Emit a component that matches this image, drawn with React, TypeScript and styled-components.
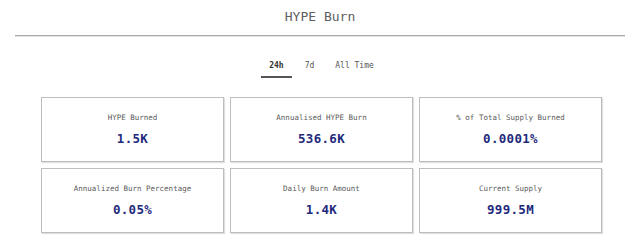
import React, { useState } from "react";
import styled, { createGlobalStyle } from "styled-components";

const GlobalStyle = createGlobalStyle`
  html, body {
    margin: 0;
    padding: 0;
    background: #ffffff;
  }
  body {
    font-family: "DejaVu Sans Mono", "Liberation Mono", monospace;
  }
`;

const stats = [
  { label: "HYPE Burned", value: "1.5K" },
  { label: "Annualised HYPE Burn", value: "536.6K" },
  { label: "% of Total Supply Burned", value: "0.0001%" },
  { label: "Annualized Burn Percentage", value: "0.05%" },
  { label: "Daily Burn Amount", value: "1.4K" },
  { label: "Current Supply", value: "999.5M" },
];

const periods = ["24h", "7d", "All Time"];

export default function App() {
  const [period, setPeriod] = useState("24h");
  return (
    <Page>
      <GlobalStyle />
      <Header>
        <Title>HYPE Burn</Title>
      </Header>
      <Tabs>
        {periods.map((p) => (
          <Tab key={p} $active={p === period} onClick={() => setPeriod(p)}>
            {p}
          </Tab>
        ))}
      </Tabs>
      <Grid>
        {stats.map((s) => (
          <Card key={s.label}>
            <Label>{s.label}</Label>
            <Value>{s.value}</Value>
          </Card>
        ))}
      </Grid>
    </Page>
  );
}

const Page = styled.div`
  width: 640px;
  height: 244px;
  overflow: hidden;
`;

const Header = styled.div`
  margin: 0 15px;
  padding-top: 9px;
  padding-bottom: 10px;
  border-bottom: 1px solid #a9a9a9;
  box-shadow: 0 1px 0 #e2e2e2;
  text-align: center;
`;

const Title = styled.h1`
  margin: 0;
  font-size: 13px;
  line-height: 16px;
  font-weight: 400;
  color: #5e5e5e;
`;

const Tabs = styled.div`
  display: flex;
  justify-content: center;
  gap: 5px;
  margin-top: 22px;
  padding-left: 3px;
`;

const Tab = styled.button<{ $active: boolean }>`
  border: none;
  background: none;
  font-family: inherit;
  font-size: 8px;
  line-height: 12px;
  padding: 2px 8px 4px;
  color: ${({ $active }) => ($active ? "#333333" : "#555555")};
  font-weight: ${({ $active }) => ($active ? 700 : 400)};
  border-bottom: 2px solid
    ${({ $active }) => ($active ? "#555555" : "transparent")};
  cursor: pointer;
`;

const Grid = styled.div`
  display: grid;
  grid-template-columns: repeat(3, 183px);
  gap: 6px;
  margin: 19px 0 0 41px;
`;

const Card = styled.div`
  height: 63px;
  border: 1px solid #bdbdbd;
  box-shadow: 1px 1px 1px rgba(0, 0, 0, 0.12);
  display: flex;
  flex-direction: column;
  align-items: center;
  justify-content: center;
  gap: 8px;
`;

const Label = styled.span`
  font-size: 7.5px;
  line-height: 10px;
  color: #5a5a5a;
`;

const Value = styled.span`
  font-size: 12.5px;
  line-height: 16px;
  font-weight: 700;
  color: #232a7c;
  letter-spacing: 0.3px;
`;
